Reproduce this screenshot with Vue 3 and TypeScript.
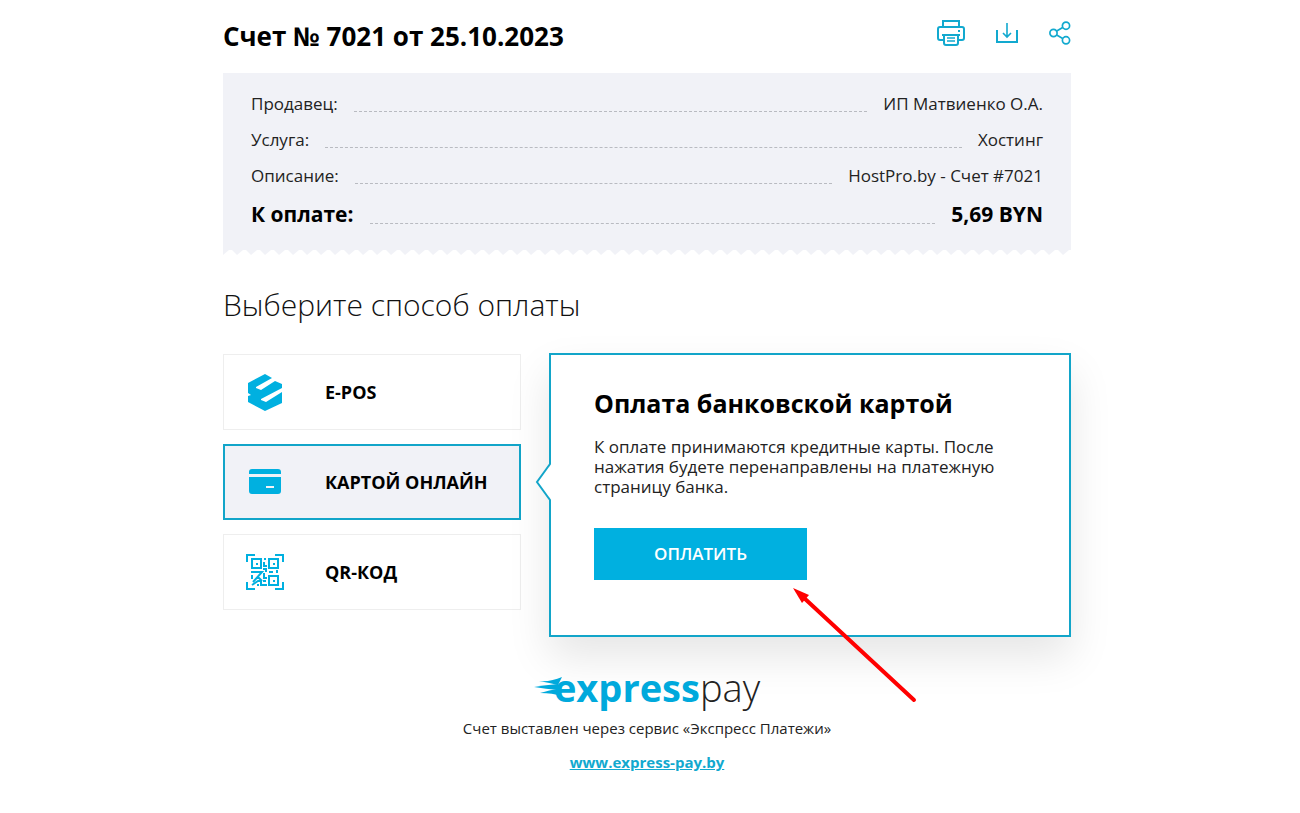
<script setup lang="ts">
import { ref } from 'vue'

interface InvoiceRow {
  label: string
  value: string
  total?: boolean
}

type MethodId = 'epos' | 'card' | 'qr'

const rows: InvoiceRow[] = [
  { label: 'Продавец:', value: 'ИП Матвиенко О.А.' },
  { label: 'Услуга:', value: 'Хостинг' },
  { label: 'Описание:', value: 'HostPro.by - Счет #7021' },
  { label: 'К оплате:', value: '5,69 BYN', total: true },
]

const methods: { id: MethodId; title: string }[] = [
  { id: 'epos', title: 'E-POS' },
  { id: 'card', title: 'КАРТОЙ ОНЛАЙН' },
  { id: 'qr', title: 'QR-КОД' },
]

const selected = ref<MethodId>('card')
</script>

<template>
  <main class="page">
    <div class="invoice">
      <header class="head">
        <h1 class="title">Счет № 7021 от 25.10.2023</h1>
        <div class="tools">
          <button type="button" class="tool" aria-label="Печать">
            <svg width="28" height="26" viewBox="0 0 28 26" fill="none" stroke="currentColor" stroke-width="2">
              <path d="M6 7V1h16v6" />
              <path d="M7 20H3q-2 0-2-2V9q0-2 2-2h22q2 0 2 2v9q0 2-2 2h-4" />
              <path d="M5 15h18" />
              <path d="M7 15v8q0 2 2 2h10q2 0 2-2v-8" />
              <path d="M10 18h8M10 21h8" stroke-width="1.3" />
              <path d="M21 11h2" />
            </svg>
          </button>
          <button type="button" class="tool" aria-label="Скачать">
            <svg width="22" height="20" viewBox="0 0 22 20" fill="none" stroke="currentColor">
              <path d="M1 7v12h20V7" stroke-width="2" />
              <path d="M11 0v14M7 10l4 4 4-4" stroke-width="1.6" />
            </svg>
          </button>
          <button type="button" class="tool" aria-label="Поделиться">
            <svg width="22" height="24" viewBox="0 0 22 24" fill="none" stroke="currentColor" stroke-width="1.7">
              <circle cx="4.500" cy="12" r="3.600" />
              <circle cx="17" cy="4.700" r="3.600" />
              <circle cx="17" cy="19.300" r="3.600" />
              <path d="M7.700 10.100l6-3.500M7.700 13.900l6 3.500" />
            </svg>
          </button>
        </div>
      </header>

      <section class="bill">
        <dl class="rows">
          <div v-for="row in rows" :key="row.label" class="row" :class="{ total: row.total }">
            <dt>{{ row.label }}</dt>
            <span class="leader" aria-hidden="true"></span>
            <dd>{{ row.value }}</dd>
          </div>
        </dl>
        <svg class="tear" width="100%" height="6" aria-hidden="true">
          <defs>
            <pattern id="teeth" width="14" height="6" patternUnits="userSpaceOnUse">
              <path d="M0 6V5L6 0h3l5 5v1z" fill="#fff" />
            </pattern>
          </defs>
          <rect width="100%" height="6" fill="url(#teeth)" />
        </svg>
      </section>

      <h2 class="subtitle">Выберите способ оплаты</h2>

      <div class="choice">
        <div class="methods">
          <button
            v-for="m in methods"
            :key="m.id"
            type="button"
            class="method"
            :class="{ active: selected === m.id }"
            :aria-pressed="selected === m.id"
            @click="selected = m.id"
          >
            <span class="icon">
              <svg v-if="m.id === 'epos'" width="34" height="37" viewBox="0 0 34 37" fill="#00b0e0">
                <path d="M17 0l7 4L8 13v1l5 2L27 7l7 3v4L13 25v1l5 2 16-10v11l-17 8L0 28v-6l3-1-3-2V9z" />
              </svg>
              <svg v-else-if="m.id === 'card'" width="32" height="26" viewBox="0 0 32 26" fill="#00b0e0">
                <path d="M0 5V3q0-3 3-3h26q3 0 3 3v2z" />
                <path d="M0 8h32v14q0 3-3 3H3q-3 0-3-3zM17 17v2h8v-2z" fill-rule="evenodd" />
              </svg>
              <svg v-else width="38" height="36" viewBox="0 0 38 36" fill="none" stroke="#00b0e0" stroke-width="2">
                <path d="M1 8V1h8M29 1h8v7M37 28v7h-8M9 35H1v-7" />
                <path d="M6 5h9v9H6zM23 5h9v9h-9zM23 22h9v9h-9z" />
                <path d="M10 9h2v2h-2zM27 9h2v2h-2zM27 26h2v2h-2z" fill="#00b0e0" stroke="none" />
                <path d="M19 4v2M18 8v4h3M17 15h3v3M5 18h11l-9 10M23 18h4M31 16v3M6 21v4M12 23l4 4M18 19v5h3M6 31l6-4h3v4h6M17 27h3M11 31h2" />
              </svg>
            </span>
            <span class="name">{{ m.title }}</span>
          </button>
        </div>

        <section class="panel">
          <svg class="pointer" width="16" height="38" viewBox="0 0 16 38" aria-hidden="true">
            <path d="M16 1L2 19l14 18z" fill="#fff" />
            <path d="M15 1L2 19l13 18" fill="none" stroke="#12a5c9" stroke-width="2" />
          </svg>
          <h3 class="panel-title">Оплата банковской картой</h3>
          <p class="panel-text">
            К оплате принимаются кредитные карты. После нажатия будете перенаправлены на платежную страницу банка.
          </p>
          <button type="button" class="pay">ОПЛАТИТЬ</button>
          <svg class="arrow" width="124" height="116" viewBox="0 0 124 116" aria-hidden="true">
            <path d="M10 9L121 112" stroke="#f00" stroke-width="4" stroke-linecap="round" />
            <path d="M0 0l16 7-7 8z" fill="#f00" />
          </svg>
        </section>
      </div>

      <footer class="foot">
        <div class="brand">
          <svg class="speed" width="28" height="22" viewBox="0 0 28 22" fill="#00a9dc" aria-hidden="true">
            <path d="M5 5q12 1 23-4l-4 8q-8-2-19-4z" />
            <path d="M0 11q12-2 24-3v6q-12-1-24-3z" />
            <path d="M6 17q10-3 17-4l4 7q-8-3-21-3z" />
          </svg>
          <span class="brand-bold">express</span><span class="brand-light">pay</span>
        </div>
        <p class="note">Счет выставлен через сервис «Экспресс Платежи»</p>
        <a class="link" href="#">www.express-pay.by</a>
      </footer>
    </div>
  </main>
</template>

<style>
body {
  margin: 0;
  background: #fff;
}
</style>

<style scoped>
.page {
  box-sizing: border-box;
  padding: 16px 6px 40px 0;
  font-family: "Open Sans", "Noto Sans", sans-serif;
  color: #000;
}
.invoice {
  max-width: 848px;
  margin: 0 auto;
}
h1, h2, h3, p, dl, dd {
  margin: 0;
}
button {
  font-family: inherit;
  cursor: pointer;
}
.head {
  display: flex;
  justify-content: space-between;
  align-items: flex-start;
}
.title {
  font-size: 26px;
  line-height: 40px;
  font-weight: 700;
}
.tools {
  display: flex;
  align-items: center;
  gap: 31px;
  height: 34px;
}
.tool {
  display: flex;
  padding: 0;
  border: 0;
  background: none;
  color: #12a9cf;
}
.bill {
  margin-top: 17px;
  background: #f1f2f7;
}
.rows {
  padding: 13px 28px 16px;
}
.row {
  display: flex;
  gap: 16px;
  font-size: 17px;
  line-height: 36px;
  color: #222;
}
.row.total {
  font-size: 21px;
  line-height: 40px;
  font-weight: 700;
  color: #000;
}
.leader {
  flex: 1;
  height: 25px;
  border-bottom: 1px dashed #b9bbc1;
}
.total .leader {
  height: 29px;
}
.tear {
  display: block;
}
.subtitle {
  margin-top: 28px;
  font-size: 30px;
  line-height: 42px;
  font-weight: 300;
  color: #111;
}
.choice {
  display: flex;
  gap: 28px;
  margin-top: 27px;
  align-items: stretch;
}
.methods {
  display: flex;
  flex-direction: column;
  gap: 14px;
  width: 298px;
  padding-top: 1px;
}
.method {
  box-sizing: border-box;
  display: flex;
  align-items: center;
  height: 76px;
  padding: 0 22px;
  border: 1px solid #eee;
  background: #fff;
  color: #000;
  text-align: left;
}
.method.active {
  border: 2px solid #12a5c9;
  padding: 0 21px;
  background: #f1f2f7;
}
.icon {
  display: flex;
  justify-content: center;
  width: 38px;
  margin-right: 41px;
}
.name {
  font-size: 18px;
  line-height: 24px;
  font-weight: 700;
}
.panel {
  box-sizing: border-box;
  position: relative;
  flex: 1;
  padding: 32px 43px 55px;
  border: 2px solid #12a5c9;
  background: #fff;
  box-shadow: 0 20px 40px rgba(0, 0, 0, 0.1);
}
.pointer {
  position: absolute;
  left: -16px;
  top: 108px;
}
.panel-title {
  font-size: 25px;
  line-height: 32px;
  font-weight: 700;
}
.panel-text {
  max-width: 420px;
  margin-top: 18px;
  font-size: 17px;
  line-height: 20px;
  color: #222;
}
.pay {
  display: block;
  width: 213px;
  height: 52px;
  margin-top: 31px;
  padding: 0 0 2px;
  border: 0;
  background: #00b0e0;
  color: #fff;
  font-size: 17px;
  font-weight: 600;
}
.arrow {
  position: absolute;
  left: 242px;
  top: 233px;
}
.foot {
  position: relative;
  display: flex;
  flex-direction: column;
  align-items: center;
  margin-top: 24px;
}
.brand {
  display: flex;
  align-items: center;
  font-size: 38px;
  line-height: 52px;
  color: #00a9dc;
}
.speed {
  margin-right: -8px;
}
.brand-bold {
  font-weight: 700;
}
.brand-light {
  font-weight: 300;
  color: #222;
}
.note {
  margin-top: 3px;
  font-size: 15px;
  line-height: 24px;
  color: #222;
}
.link {
  margin-top: 10px;
  font-size: 15px;
  line-height: 24px;
  font-weight: 700;
  color: #12a9cf;
}
</style>
